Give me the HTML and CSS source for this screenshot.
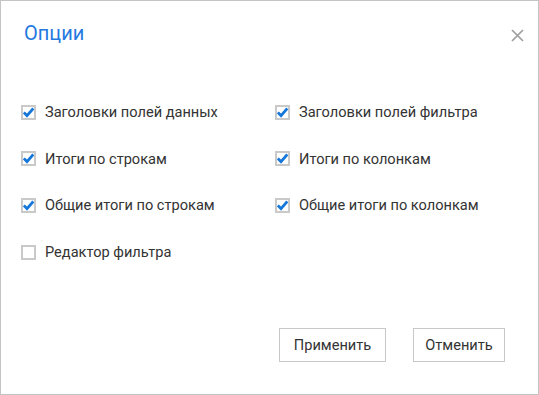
FILE: index.html
```html
<!DOCTYPE html>
<html lang="ru">
<head>
    <meta charset="UTF-8">
    <title>Опции</title>
    <link rel="stylesheet" href="styles.css">
</head>
<body>
    <div class="dialog">
        <div class="dialog-header">
            <h1 class="dialog-title">Опции</h1>
            <span class="dialog-close">
                <svg width="13" height="13" viewBox="0 0 13 13">
                    <path d="M1 1 L12 12 M12 1 L1 12" stroke="#9e9e9e" stroke-width="1.7" fill="none"/>
                </svg>
            </span>
        </div>

        <div class="options">
            <label class="option"><span class="check"><svg viewBox="0 0 11 11"><path d="M0.8 5.4 L4 8.6 L10.3 1.4" /></svg></span>Заголовки полей данных</label>
            <label class="option"><span class="check"><svg viewBox="0 0 11 11"><path d="M0.8 5.4 L4 8.6 L10.3 1.4" /></svg></span>Заголовки полей фильтра</label>
            <label class="option"><span class="check"><svg viewBox="0 0 11 11"><path d="M0.8 5.4 L4 8.6 L10.3 1.4" /></svg></span>Итоги по строкам</label>
            <label class="option"><span class="check"><svg viewBox="0 0 11 11"><path d="M0.8 5.4 L4 8.6 L10.3 1.4" /></svg></span>Итоги по колонкам</label>
            <label class="option"><span class="check"><svg viewBox="0 0 11 11"><path d="M0.8 5.4 L4 8.6 L10.3 1.4" /></svg></span>Общие итоги по строкам</label>
            <label class="option"><span class="check"><svg viewBox="0 0 11 11"><path d="M0.8 5.4 L4 8.6 L10.3 1.4" /></svg></span>Общие итоги по колонкам</label>
            <label class="option"><span class="check"></span>Редактор фильтра</label>
        </div>

        <div class="dialog-footer">
            <button class="btn btn-apply">Применить</button>
            <button class="btn btn-cancel">Отменить</button>
        </div>
    </div>
</body>
</html>
```

FILE: styles.css
```css
body {
    margin: 0;
    font-family: Roboto, "Liberation Sans", sans-serif;
    background-color: #fff;
}
.dialog {
    box-sizing: border-box;
    width: 539px;
    height: 395px;
    border: 1px solid #c4c4c4;
    display: flex;
    flex-direction: column;
    padding: 0 33px 32px 20px;
}
.dialog-header {
    display: flex;
    justify-content: space-between;
    align-items: flex-start;
    padding-top: 20px;
    margin-right: -19px;
    padding-left: 3px;
}
.dialog-title {
    margin: 0;
    font-size: 20px;
    line-height: 24px;
    font-weight: 400;
    color: #2479e0;
}
.dialog-close {
    display: block;
    width: 13px;
    height: 13px;
    margin-top: 8px;
}
.dialog-close svg {
    display: block;
}
.options {
    display: grid;
    grid-template-columns: 254px 1fr;
    row-gap: 26.7px;
    margin-top: 57px;
}
.option {
    display: flex;
    align-items: center;
    height: 20px;
    font-size: 14.6px;
    color: #333;
}
.check {
    box-sizing: border-box;
    width: 15px;
    height: 15px;
    border: 2px solid #c9c9c9;
    background-color: #fff;
    margin-right: 9px;
    flex-shrink: 0;
}
.check svg {
    display: block;
    width: 11px;
    height: 11px;
}
.check svg path {
    fill: none;
    stroke: #1677db;
    stroke-width: 2.8;
}
.dialog-footer {
    margin-top: auto;
    display: flex;
    justify-content: flex-end;
    gap: 27px;
}
.btn {
    height: 34px;
    padding: 0;
    background-color: #fff;
    border: 1px solid #c8c8c8;
    font-family: Roboto, "Liberation Sans", sans-serif;
    font-size: 14.6px;
    color: #333;
    cursor: pointer;
}
.btn-apply {
    width: 107px;
}
.btn-cancel {
    width: 92px;
}
```
